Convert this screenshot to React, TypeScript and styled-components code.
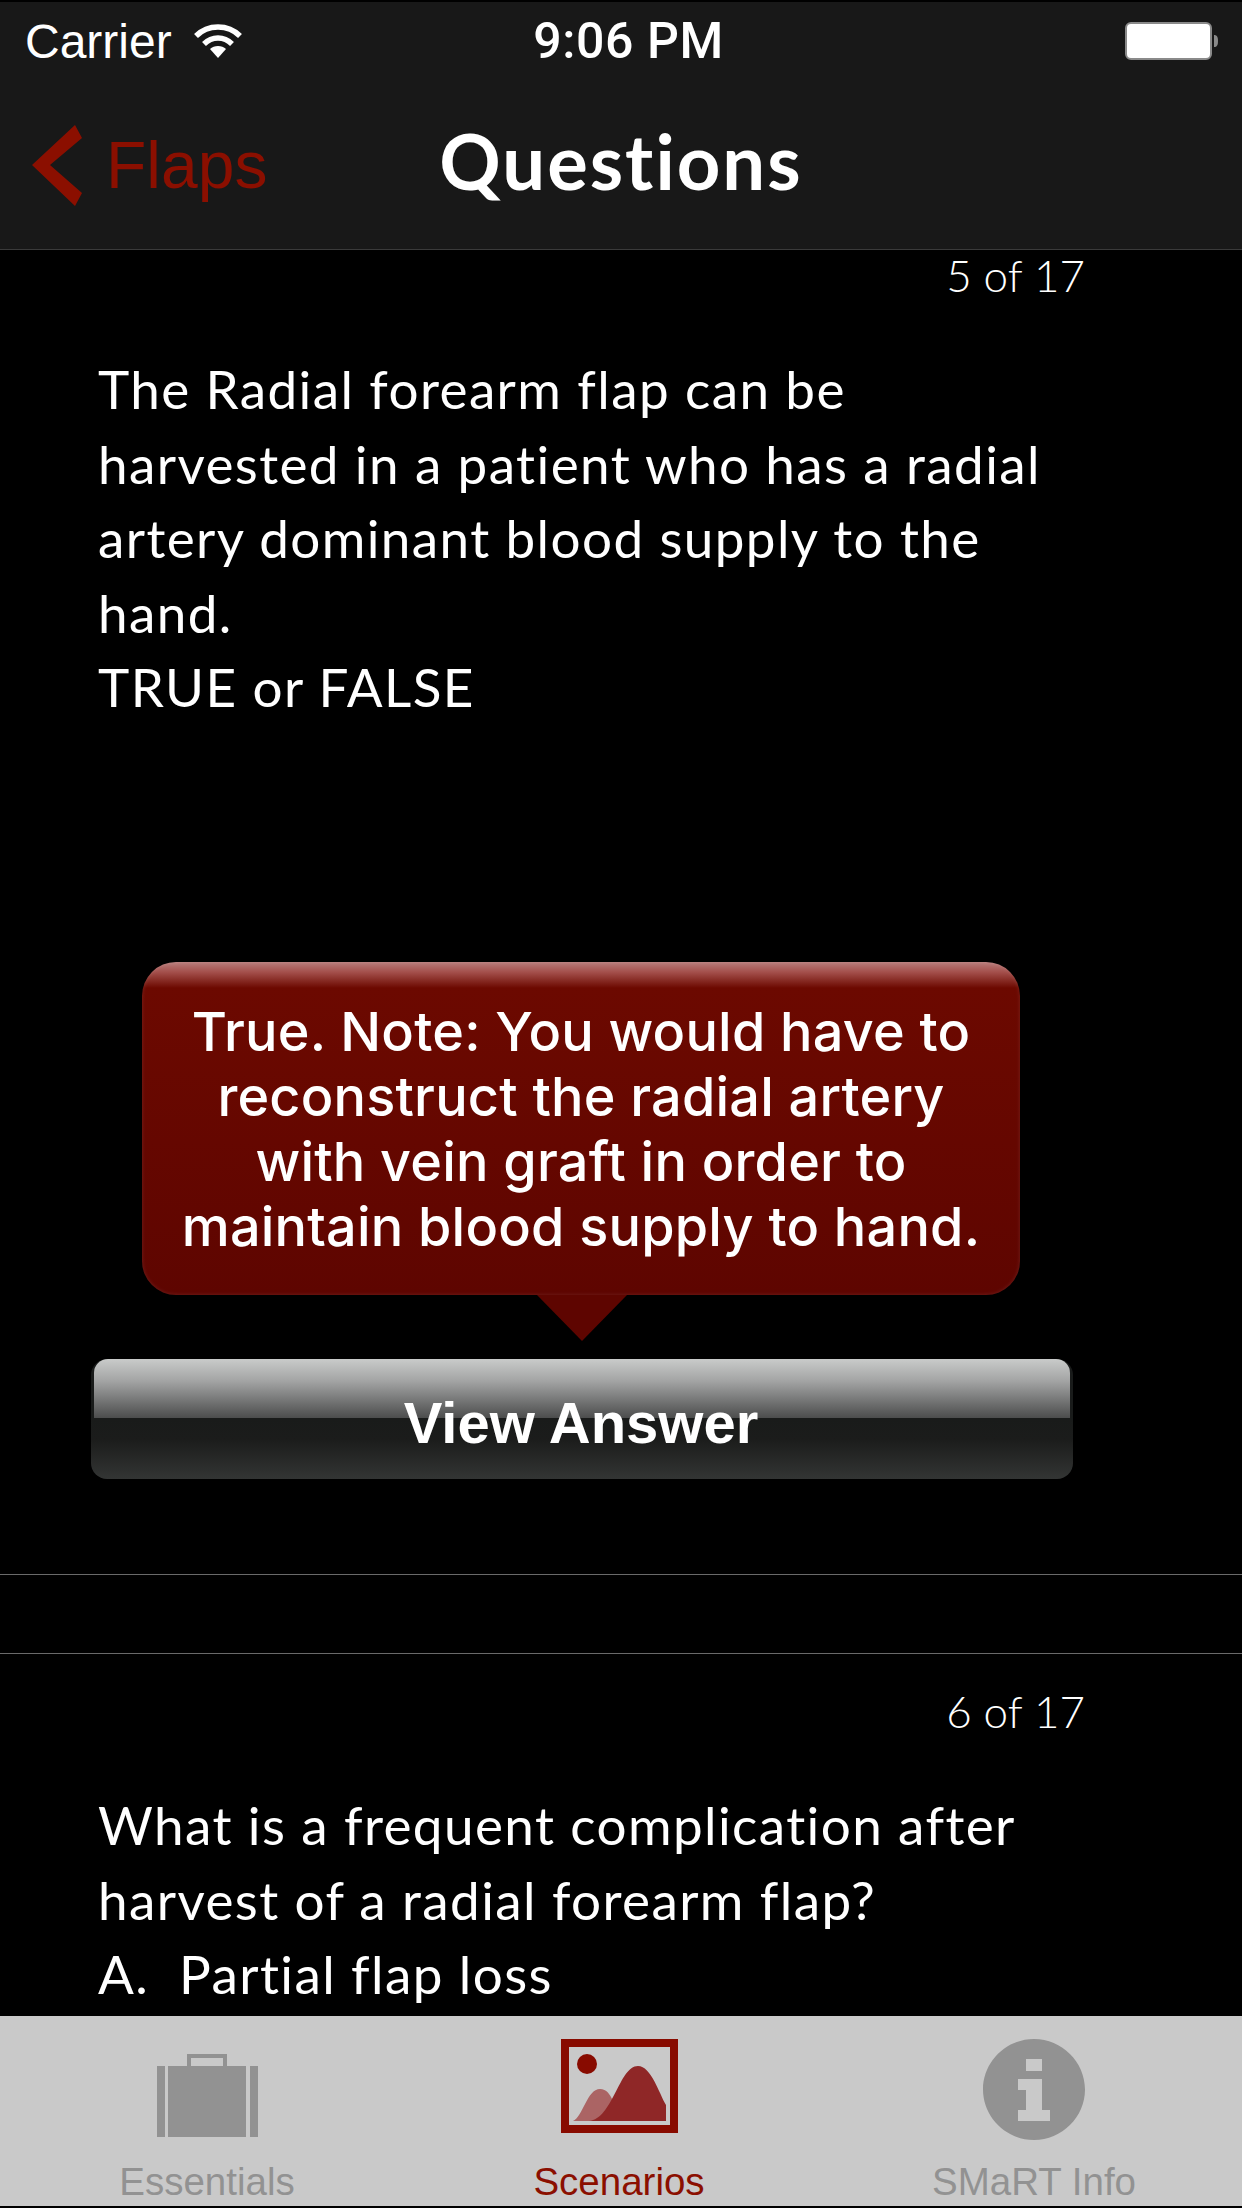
import styled, { createGlobalStyle } from 'styled-components'

const GlobalStyle = createGlobalStyle`
  html, body {
    margin: 0;
    padding: 0;
    background: #000;
  }
`

const Screen = styled.div`
  width: 1242px;
  height: 2208px;
  box-sizing: border-box;
  padding: 2px 0;
  display: flex;
  flex-direction: column;
  background: #000;
  overflow: hidden;
`

const Header = styled.header`
  flex: none;
  height: 248px;
  box-sizing: border-box;
  background: #181818;
  border-bottom: 1px solid #3a3a3a;
`

const StatusBar = styled.div`
  height: 84px;
  box-sizing: border-box;
  padding: 0 22px 6px 25px;
  display: grid;
  grid-template-columns: 1fr auto 1fr;
  align-items: center;
  color: #fff;
  font-family: 'Liberation Sans', Arial, sans-serif;
  font-size: 48px;
`

const Carrier = styled.div`
  display: flex;
  align-items: center;
  gap: 22px;
`

const Clock = styled.div`
  font-family: Roboto, sans-serif;
  font-weight: 500;
  font-size: 50px;
  letter-spacing: 0.6px;
  margin-left: 12px;
`

const BatteryWrap = styled.div`
  justify-self: end;
  display: flex;
`

const NavBar = styled.nav`
  height: 163px;
  box-sizing: border-box;
  padding: 0 0 0 32px;
  display: grid;
  grid-template-columns: 1fr auto 1fr;
  align-items: center;
`

const BackLink = styled.div`
  display: flex;
  align-items: center;
  gap: 24px;
  color: #8b0f00;
  font-family: 'Liberation Sans', Arial, sans-serif;
  font-size: 66px;

  svg {
    margin-top: -4px;
  }
`

const BackLabel = styled.span`
  margin-top: -6px;
`

const Title = styled.h1`
  margin: 0 0 14px -32px;
  color: #fff;
  font-family: Lato, sans-serif;
  font-weight: 700;
  font-size: 76px;
  letter-spacing: 2px;
  font-variant-ligatures: none;
  line-height: 1;
`

const List = styled.main`
  flex: 1;
  min-height: 0;
  overflow: hidden;
`

const Cell = styled.section<{ $top: number; $height?: number }>`
  box-sizing: border-box;
  padding: ${(p) => p.$top}px 158px 0 98px;
  height: ${(p) => (p.$height ? `${p.$height}px` : 'auto')};
  border-bottom: ${(p) => (p.$height ? '1px solid #6a6a6a' : 'none')};
`

const Spacer = styled.div`
  height: 78px;
  border-bottom: 1px solid #6a6a6a;
`

const Counter = styled.div`
  margin-right: -1px;
  text-align: right;
  color: #fff;
  font-family: Lato, sans-serif;
  font-weight: 300;
  font-size: 44px;
  line-height: 50px;
`

const Question = styled.p<{ $top: number }>`
  margin: ${(p) => p.$top}px -40px 0 0;
  color: #fff;
  font-family: Lato, sans-serif;
  font-size: 53px;
  letter-spacing: 1.4px;
  font-variant-ligatures: none;
  line-height: 74.5px;
`

const AnswerBubble = styled.div`
  position: relative;
  width: 878px;
  height: 333px;
  box-sizing: border-box;
  margin: 237px 0 0 44px;
  padding-top: 37px;
  border-radius: 34px;
  background: linear-gradient(#b87d7b 0, #a4504c 10px, #6c0900 26px, #5e0500 100%);
  box-shadow: inset 0 0 4px rgba(255, 255, 255, 0.12);
  color: #fff;
  font-family: Inter, sans-serif;
  font-weight: 500;
  font-size: 54px;
  letter-spacing: 0.2px;
  line-height: 65px;
  text-align: center;

  &::after {
    content: '';
    position: absolute;
    left: 395px;
    top: 100%;
    border-style: solid;
    border-width: 46px 45px 0;
    border-color: #5e0500 transparent transparent;
  }
`

const AnswerButton = styled.button`
  position: relative;
  display: block;
  width: 982px;
  height: 120px;
  margin: 64px 0 0 -7px;
  padding: 8px 0 0;
  border: 0;
  border-radius: 16px;
  background: linear-gradient(#191b1a 0, #191b1a 60px, #1b1c1b 80px, #333534 100%);
  color: #fff;
  font-family: 'Liberation Sans', Arial, sans-serif;
  font-weight: 700;
  font-size: 58px;

  &::before {
    content: '';
    position: absolute;
    left: 3px;
    right: 3px;
    top: 0;
    height: 59px;
    border-radius: 14px 14px 0 0;
    background: linear-gradient(#c9cbca 0, #a3a4a4 22px, #4c4d4d 100%);
  }
`

const ButtonLabel = styled.span`
  position: relative;
  left: -1px;
`

const TabBar = styled.footer`
  flex: none;
  height: 190px;
  box-sizing: border-box;
  padding-top: 23px;
  display: grid;
  grid-template-columns: repeat(3, 1fr);
  background: #c9c9c9;
`

const Tab = styled.div<{ $active?: boolean; $nudge?: number }>`
  display: flex;
  flex-direction: column;
  align-items: center;
  padding-right: ${(p) => p.$nudge ?? 0}px;
  color: ${(p) => (p.$active ? '#8b0f00' : '#929292')};
  font-family: 'Liberation Sans', Arial, sans-serif;
  font-size: 38.5px;
  line-height: 44px;
  svg {
    display: block;
    margin-bottom: 20px;
  }
`

const WifiIcon = () => (
  <svg width="48" height="34" viewBox="0 0 48 34" fill="none" stroke="#fff" strokeWidth="5.5">
    <path d="M2 12 C14 0 34 0 46 12" />
    <path d="M10 20 C18 12 30 12 38 20" />
    <path d="M24 34 L16 25 C20 21 28 21 32 25 Z" fill="#fff" stroke="none" />
  </svg>
)

const BatteryIcon = () => (
  <svg width="95" height="38" viewBox="0 0 95 38">
    <rect x="1" y="1" width="85" height="36" rx="5" fill="#fff" stroke="#8a8a8a" strokeWidth="2" />
    <path d="M89 13 C92 13 93 15 93 19 C93 23 92 25 89 25 Z" fill="#8a8a8a" />
  </svg>
)

const ChevronIcon = () => (
  <svg width="50" height="81" viewBox="0 0 50 81">
    <polygon points="0,40 43,0 50,13 18,40 50,68 43,81" fill="#8b0f00" />
  </svg>
)

const BriefcaseIcon = () => (
  <svg width="102" height="101" viewBox="0 0 102 101" fill="#929292">
    <rect x="1" y="27" width="8" height="71" />
    <rect x="12" y="27" width="78" height="71" />
    <rect x="94" y="27" width="8" height="71" />
    <path fillRule="evenodd" d="M31 15 H71 V27 H67 V19 H35 V27 H31 Z" />
  </svg>
)

const PictureIcon = () => (
  <svg width="117" height="101" viewBox="0 0 117 101">
    <path fillRule="evenodd" fill="#880b00" d="M0 0 H117 V94 H0 Z M8 8 V86 H109 V8 Z" />
    <circle cx="26" cy="25" r="10" fill="#880b00" />
    <path d="M12 82 C22 78 26 50 39 50 C52 50 54 72 60 82 Z" fill="#ab6464" />
    <path d="M28 82 C52 80 58 27 77 27 C90 27 98 54 105 66 V82 Z" fill="#8f2727" />
  </svg>
)

const InfoIcon = () => (
  <svg width="102" height="101" viewBox="0 0 102 101">
    <path
      fillRule="evenodd"
      fill="#929292"
      d="M51 0 C79 0 102 23 102 50.5 C102 78 79 101 51 101 C23 101 0 78 0 50.5 C0 23 23 0 51 0 Z M43 20 V32 H59 V20 Z M35 40 V51 H43 V71 H35 V82 H67 V71 H59 V40 Z"
    />
  </svg>
)

export default function App() {
  return (
    <>
      <GlobalStyle />
      <Screen>
        <Header>
          <StatusBar>
            <Carrier>
              Carrier
              <WifiIcon />
            </Carrier>
            <Clock>9:06 PM</Clock>
            <BatteryWrap>
              <BatteryIcon />
            </BatteryWrap>
          </StatusBar>
          <NavBar>
            <BackLink>
              <ChevronIcon />
              <BackLabel>Flaps</BackLabel>
            </BackLink>
            <Title>Questions</Title>
          </NavBar>
        </Header>
        <List>
          <Cell $top={0} $height={1325}>
            <Counter>5 of 17</Counter>
            <Question $top={52}>
              The Radial forearm flap can be
              <br />
              harvested in a patient who has a radial
              <br />
              artery dominant blood supply to the
              <br />
              hand.
              <br />
              TRUE or FALSE
            </Question>
            <AnswerBubble>
              True. Note: You would have to
              <br />
              reconstruct the radial artery
              <br />
              with vein graft in order to
              <br />
              maintain blood supply to hand.
            </AnswerBubble>
            <AnswerButton>
              <ButtonLabel>View Answer</ButtonLabel>
            </AnswerButton>
          </Cell>
          <Spacer />
          <Cell $top={32}>
            <Counter>6 of 17</Counter>
            <Question $top={52}>
              What is a frequent complication after
              <br />
              harvest of a radial forearm flap?
              <br />
              A.&nbsp; Partial flap loss
            </Question>
          </Cell>
        </List>
        <TabBar>
          <Tab>
            <BriefcaseIcon />
            Essentials
          </Tab>
          <Tab $active $nudge={4}>
            <PictureIcon />
            Scenarios
          </Tab>
          <Tab $nudge={2}>
            <InfoIcon />
            SMaRT Info
          </Tab>
        </TabBar>
      </Screen>
    </>
  )
}
